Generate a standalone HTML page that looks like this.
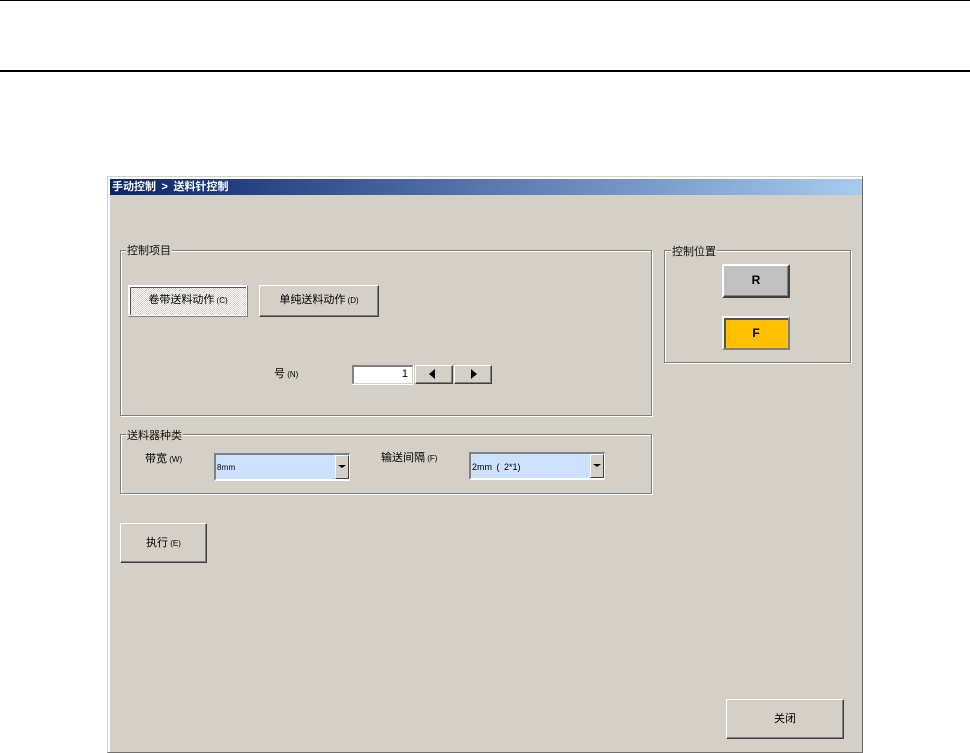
<!DOCTYPE html>
<html lang="zh-CN">
<head>
<meta charset="utf-8">
<title>送料针控制</title>
<style>
html,body{margin:0;padding:0;background:#fff;}
body{width:970px;height:753px;position:relative;overflow:hidden;font-family:"Liberation Sans","WenQuanYi Zen Hei","Noto Sans CJK SC",sans-serif;font-size:11px;color:#000;}
div{position:absolute;box-sizing:border-box;}
.s{font-size:8px;}
.t{white-space:nowrap;line-height:14px;}
.bar{left:0;width:970px;background:#000;}
.win{left:107px;top:176px;width:756px;height:577px;background:#d4d0c8;border-top:1px solid #d4d0c8;border-left:1px solid #d4d0c8;border-right:1px solid #6f6f6f;border-bottom:1px solid #6f6f6f;box-shadow:inset 2px 2px 0 #fff;}
.title{left:110px;top:179px;width:752px;height:16px;background:linear-gradient(90deg,#0a246a,#a6caf0);color:#fff;font-weight:bold;font-size:11px;line-height:16px;padding-left:2px;white-space:nowrap;word-spacing:2.5px;}
.grp{border:1px solid #808080;box-shadow:1px 1px 0 #fff,inset 1px 1px 0 #fff;}
.lbl{background:#d4d0c8;padding:0 1px;white-space:nowrap;line-height:14px;font-size:11px;color:#111;}
.btn{background:#d4d0c8;border-top:1px solid #fff;border-left:1px solid #fff;border-right:1px solid #404040;border-bottom:1px solid #404040;box-shadow:inset -1px -1px 0 #808080;text-align:center;white-space:nowrap;}
.pressed{border:1px solid #fff;border-right-color:#808080;border-bottom-color:#808080;box-shadow:inset 0 0 0 1px #fff,inset 2px 2px 0 #555;}
.hatch{background-color:#e4e2dc;background-image:repeating-conic-gradient(#fff 0 25%,#d4d0c8 0 50%);background-size:2px 2px;}
.combo{background:#cce0ff;border-top:2px solid #808080;border-left:2px solid #808080;border-right:1px solid #fff;border-bottom:2px solid #fff;}
.cbtn{background:#d4d0c8;border-top:1px solid #fff;border-left:1px solid #fff;border-right:1px solid #404040;border-bottom:1px solid #404040;}
.tri{width:0;height:0;}
</style>
</head>
<body>
<div class="bar" style="top:0;height:1px;"></div>
<div class="bar" style="top:70px;height:2px;"></div>

<div class="win"></div>
<div class="title">手动控制 &gt; 送料针控制</div>

<div class="grp" style="left:120px;top:250px;width:532px;height:166px;"></div>
<div class="lbl" style="left:126px;top:244px;">控制项目</div>

<div class="btn pressed hatch" style="left:128px;top:285px;width:120px;height:32px;line-height:29px;">卷带送料动作<span class="s"> (C)</span></div>
<div class="btn" style="left:259px;top:285px;width:120px;height:32px;line-height:29px;">单纯送料动作<span class="s"> (D)</span></div>

<div class="t" style="left:274px;top:367px;">号<span class="s"> (N)</span></div>
<div style="left:352px;top:365px;width:61px;height:19px;background:#fff;border-top:2px solid #808080;border-left:2px solid #808080;border-right:1px solid #d4d0c8;border-bottom:1px solid #d4d0c8;box-shadow:0 1px 0 #fff,1px 0 0 #fff;text-align:right;padding-right:4px;line-height:15px;">1</div>
<div class="btn" style="left:415px;top:365px;width:38px;height:19px;"></div>
<div class="tri" style="left:429px;top:369px;border-top:5px solid transparent;border-bottom:5px solid transparent;border-right:6px solid #000;"></div>
<div class="btn" style="left:454px;top:365px;width:38px;height:19px;"></div>
<div class="tri" style="left:471px;top:369px;border-top:5px solid transparent;border-bottom:5px solid transparent;border-left:6px solid #000;"></div>

<div class="grp" style="left:120px;top:434px;width:532px;height:60px;"></div>
<div class="lbl" style="left:126px;top:429px;">送料器种类</div>

<div class="t" style="left:145px;top:452px;">带宽<span class="s"> (W)</span></div>
<div class="combo" style="left:214px;top:453px;width:136px;height:28px;"></div>
<div class="t" style="left:217px;top:461px;font-size:8px;letter-spacing:.2px;">8mm</div>
<div class="cbtn" style="left:335px;top:455px;width:14px;height:24px;"></div>
<div class="tri" style="left:338px;top:465px;border-left:4px solid transparent;border-right:4px solid transparent;border-top:3px solid #000;"></div>

<div class="t" style="left:381px;top:451px;">输送间隔<span class="s"> (F)</span></div>
<div class="combo" style="left:469px;top:452px;width:136px;height:28px;"></div>
<div class="t" style="left:472px;top:460px;font-size:9px;word-spacing:2px;">2mm ( 2*1)</div>
<div class="cbtn" style="left:590px;top:454px;width:14px;height:24px;"></div>
<div class="tri" style="left:593px;top:464px;border-left:4px solid transparent;border-right:4px solid transparent;border-top:3px solid #000;"></div>

<div class="btn" style="left:120px;top:523px;width:87px;height:40px;line-height:39px;">执行<span class="s"> (E)</span></div>

<div class="grp" style="left:664px;top:250px;width:187px;height:113px;"></div>
<div class="lbl" style="left:671px;top:245px;">控制位置</div>

<div class="btn" style="left:722px;top:264px;width:68px;height:34px;background:#c0c0c0;border:2px solid #fff;border-right-color:#404040;border-bottom-color:#404040;box-shadow:inset -1px -1px 0 #808080;font-weight:bold;font-size:12px;line-height:29px;">R</div>
<div class="btn" style="left:722px;top:316px;width:68px;height:34px;background:#ffc000;border:2px solid #f4f4f4;border-right-color:#808080;border-bottom-color:#808080;box-shadow:inset 2px 2px 0 #505050;font-weight:bold;font-size:12px;line-height:31px;">F</div>

<div class="btn" style="left:726px;top:699px;width:118px;height:40px;line-height:39px;">关闭</div>
</body>
</html>
